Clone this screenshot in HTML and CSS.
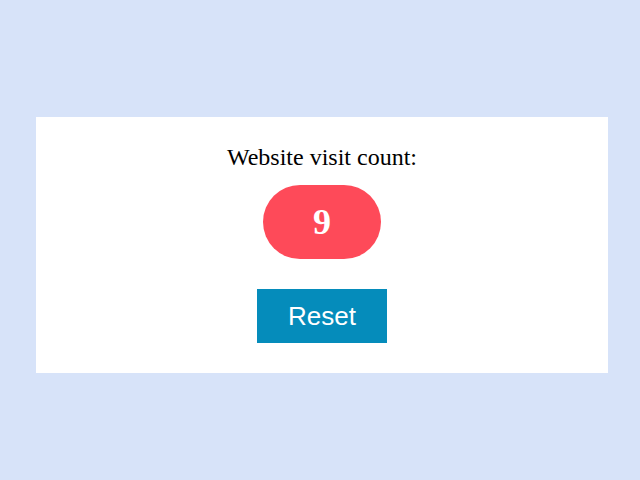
FILE: index.html
```html
<!DOCTYPE html>
<html>
<head>
<meta charset="utf-8">
<link rel="stylesheet" href="styles.css">
</head>
<body>
<div class="card">
  <p class="label">Website visit count:</p>
  <div class="count">9</div>
  <button class="reset">Reset</button>
</div>
</body>
</html>
```
FILE: styles.css
```css
html, body {
  margin: 0;
  padding: 0;
}
body {
  background: #d7e3f9;
  width: 640px;
  height: 480px;
  font-family: "Liberation Serif", "Times New Roman", serif;
  padding-top: 117px;
  box-sizing: border-box;
}
.card {
  background: #ffffff;
  width: 572px;
  height: 256px;
  margin-left: 36px;
  box-sizing: border-box;
  padding-top: 27px;
  display: flex;
  flex-direction: column;
  align-items: center;
}
.label {
  margin: 0;
  font-size: 24px;
  color: #000;
}
.count {
  margin-top: 14px;
  width: 118px;
  height: 74px;
  border-radius: 37px;
  background: #fe4a59;
  color: #fff;
  font-weight: bold;
  font-size: 36px;
  display: flex;
  align-items: center;
  justify-content: center;
}
.reset {
  margin-top: 30px;
  width: 130px;
  height: 54px;
  border: none;
  background: #058cbb;
  color: #fff;
  font-family: "Liberation Sans", Arial, sans-serif;
  font-size: 26px;
  padding: 0;
}
```
